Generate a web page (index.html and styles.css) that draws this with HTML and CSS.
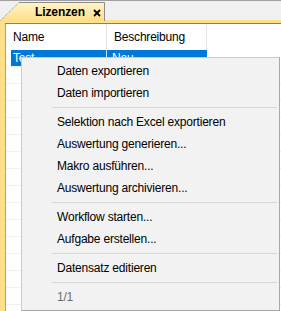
FILE: index.html
```html
<!DOCTYPE html>
<html lang="de">
<head>
  <meta charset="UTF-8" />
  <title>Lizenzen</title>
  <link rel="stylesheet" href="styles.css">
</head>
<body>

  <div class="tabbar">
    <div class="tab">
      <svg class="tab-shape" width="105" height="20" viewBox="0 0 105 20">
        <defs>
          <linearGradient id="tabfill" x1="0" y1="0" x2="0" y2="1">
            <stop offset="0" stop-color="#fff3c8"/>
            <stop offset="1" stop-color="#ffdf88"/>
          </linearGradient>
        </defs>
        <path d="M0.5 20 L19 1.5 L104.5 1.5 L104.5 20 Z" fill="url(#tabfill)"/>
        <path d="M0.5 19.5 L19 1.5" fill="none" stroke="#8c8c8c" stroke-width="1" stroke-dasharray="1 1"/>
        <path d="M19 1.5 L104.5 1.5 L104.5 20" fill="none" stroke="#8c8c8c" stroke-width="1"/>
      </svg>
      <span class="tab-title">Lizenzen</span>
      <svg class="tab-close" width="8" height="8" viewBox="0 0 8 8">
        <path d="M1 1 L7 7 M7 1 L1 7" stroke="#000" stroke-width="1.8" fill="none"/>
      </svg>
    </div>
  </div>

  <div class="panel">
    <div class="grid">
      <div class="row head">
        <div class="cell">Name</div>
        <div class="cell">Beschreibung</div>
      </div>
      <div class="row selected">
        <div class="cell">Test</div>
        <div class="cell">Neu</div>
      </div>
      <div class="row"></div>
      <div class="row"></div>
      <div class="row"></div>
      <div class="row"></div>
      <div class="row"></div>
      <div class="row"></div>
      <div class="row"></div>
      <div class="row"></div>
      <div class="row"></div>
      <div class="row"></div>
      <div class="row"></div>
      <div class="row"></div>
      <div class="row"></div>
      <div class="row"></div>
    </div>
  </div>

  <div class="menu">
    <div class="item">Daten exportieren</div>
    <div class="item">Daten importieren</div>
    <div class="sep"></div>
    <div class="item">Selektion nach Excel exportieren</div>
    <div class="item">Auswertung generieren...</div>
    <div class="item">Makro ausführen...</div>
    <div class="item">Auswertung archivieren...</div>
    <div class="sep"></div>
    <div class="item">Workflow starten...</div>
    <div class="item">Aufgabe erstellen...</div>
    <div class="sep"></div>
    <div class="item">Datensatz editieren</div>
    <div class="sep"></div>
    <div class="item disabled">1/1</div>
  </div>

</body>
</html>
```

FILE: styles.css
```css
body {
  margin: 0;
  width: 281px;
  height: 311px;
  overflow: hidden;
  background: #f0f0f0;
  font-family: "Liberation Sans", Arial, sans-serif;
  font-size: 12px;
  letter-spacing: -0.2px;
  color: #000;
  position: relative;
}

.tabbar {
  height: 19px;
  border-top: 1px solid #a0a0a0;
  display: flex;
  align-items: flex-end;
}

.tab {
  position: relative;
  width: 105px;
  height: 20px;
  margin-bottom: -1px;
  display: flex;
  align-items: center;
  z-index: 1;
}

.tab-shape {
  position: absolute;
  left: 0;
  top: 0;
}

.tab-title {
  position: relative;
  margin-left: 35px;
  margin-top: 2px;
  font-weight: bold;
  letter-spacing: -0.1px;
}

.tab-close {
  position: relative;
  margin-left: 8px;
  margin-top: 3px;
}

.panel {
  border-top: 3px solid #ffdf88;
  border-left: 5px solid #ffdf88;
  height: 288px;
}

.grid {
  border-top: 1px solid #808080;
  border-left: 1px solid #a0a0a0;
  background: #fff;
  height: 100%;
}

.row {
  height: 17px;
  display: grid;
  grid-template-columns: 101px 100px;
  border-bottom: 1px solid #f0f0f0;
  box-sizing: border-box;
}

.row.head {
  height: 26px;
  border-bottom: none;
  align-items: center;
}

.row .cell {
  padding-left: 7px;
  border-right: 1px solid #e5e5e5;
  height: 100%;
  display: flex;
  align-items: center;
}

.row.selected {
  margin-left: 5px;
  grid-template-columns: 96px 100px;
  width: 196px;
  background: #0078d7;
  color: #fff;
}

.row.selected .cell {
  padding-left: 2px;
  border-right-color: #cce4f7;
}

.row.selected .cell + .cell {
  padding-left: 5px;
  border-right: none;
}

.menu {
  position: absolute;
  left: 21px;
  top: 57px;
  width: 257px;
  padding: 2px 0;
  background: #f2f2f2;
  border: 1px solid #cccccc;
  border-right-color: #a8a8a8;
  border-bottom-color: #a8a8a8;
}

.item {
  height: 22px;
  line-height: 22px;
  padding-left: 35px;
  white-space: nowrap;
}

.item.disabled {
  color: #6d6d6d;
}

.sep {
  height: 1px;
  margin: 3px 2px 3px 30px;
  background: #d7d7d7;
}
```
